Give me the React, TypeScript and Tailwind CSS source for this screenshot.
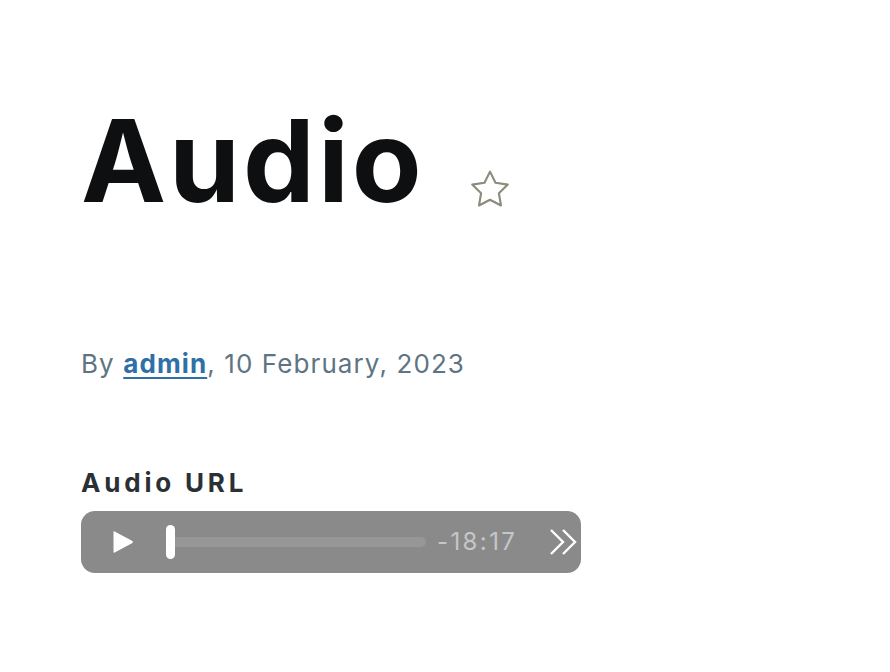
function Star() {
  return (
    <svg viewBox="0 0 24 24" className="h-[48px] w-[48px]" fill="none" stroke="#8c8a7b" strokeWidth="1.05" strokeLinejoin="round">
      <path d="M12 2.8l2.75 5.6 6.15.9-4.45 4.35 1.05 6.1L12 16.85 6.5 19.75l1.05-6.1L3.1 9.3l6.15-.9L12 2.8z" />
    </svg>
  );
}

function AudioPlayer() {
  return (
    <div className="mt-[15px] flex h-[62px] w-[500px] items-center overflow-hidden rounded-[14px] bg-[#8a8a8a]">
      <div className="ml-[30px] flex w-[24px] items-center justify-center">
        <svg viewBox="0 0 24 24" className="h-[24px] w-[24px]" fill="white">
          <path d="M2.5 2.2 Q2.5 0.9 3.7 1.6 L21.4 11 Q22.5 12 21.4 13 L3.7 22.4 Q2.5 23.1 2.5 21.8 Z" />
        </svg>
      </div>
      <div className="ml-[31px] flex items-center">
        <div className="h-[34px] w-[9px] rounded-full bg-white" />
        <div className="h-[10px] w-[251px] rounded-r-full bg-[#979797]" />
      </div>
      <span className="ml-[11px] w-[80px] text-[24px] tracking-[2.4px] text-[#c6c6c6]">-18:17</span>
      <svg viewBox="0 0 30 30" className="ml-[32px] h-[30px] w-[30px] shrink-0" fill="none" stroke="white" strokeWidth="2.4">
        <path d="M2 3l12 12L2 27" />
        <path d="M14 3l12 12-12 12" />
      </svg>
    </div>
  );
}

export default function App() {
  return (
    <div className="min-h-screen bg-white px-[81px] pt-[104px] font-['Inter',sans-serif]">
      <div className="flex items-end">
        <h1 className="text-[114px] font-bold leading-[1] tracking-[3px] text-[#0e0f11]">Audio</h1>
        <div className="mb-[4px] ml-[41px]">
          <Star />
        </div>
      </div>
      <p className="mt-[126px] text-[26px] tracking-[1.1px] text-[#5f7482]">
        By{" "}
        <a href="#" className="font-bold text-[#2f6fa7] underline decoration-[2px] underline-offset-[4px]">
          admin
        </a>
        , 10 February, 2023
      </p>
      <h2 className="mt-[87px] text-[26px] font-bold leading-[1] tracking-[3.8px] text-[#2b3035]">Audio URL</h2>
      <AudioPlayer />
    </div>
  );
}
